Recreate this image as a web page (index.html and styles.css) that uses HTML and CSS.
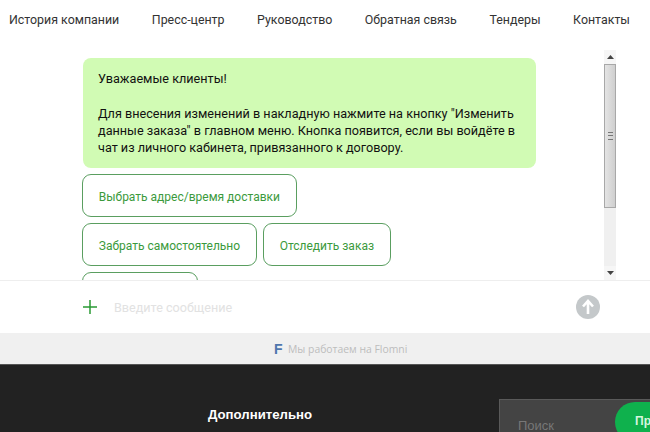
FILE: index.html

```html
<!DOCTYPE html>
<html lang="ru">
<head>
  <meta charset="UTF-8">
  <title>Чат</title>
  <link rel="stylesheet" href="styles.css">
</head>
<body>

  <div class="nav">
    <a>История компании</a>
    <a>Пресс-центр</a>
    <a>Руководство</a>
    <a>Обратная связь</a>
    <a>Тендеры</a>
    <a>Контакты</a>
  </div>

  <div class="chat">
    <div class="messages">
      <div class="bubble">
        <p>Уважаемые клиенты!</p>
        <p>Для внесения изменений в накладную нажмите на кнопку "Изменить данные заказа" в главном меню. Кнопка появится, если вы войдёте в чат из личного кабинета, привязанного к договору.</p>
      </div>
      <div class="actions">
        <button>Выбрать адрес/время доставки</button>
      </div>
      <div class="actions">
        <button>Забрать самостоятельно</button>
        <button>Отследить заказ</button>
      </div>
      <div class="actions">
        <button class="cut">&nbsp;</button>
      </div>
    </div>
    <div class="scrollbar">
      <div class="arrow">
        <svg width="7" height="4" viewBox="0 0 7 4"><path d="M0 4 L3.5 0 L7 4 Z" fill="#444"/></svg>
      </div>
      <div class="thumb"><span class="grip"></span></div>
      <div class="arrow arrow-down">
        <svg width="7" height="4" viewBox="0 0 7 4"><path d="M0 0 L3.5 4 L7 0 Z" fill="#444"/></svg>
      </div>
    </div>
  </div>

  <div class="composer">
    <svg class="plus" width="14" height="14" viewBox="0 0 14 14"><path d="M7 0 V14 M0 7 H14" stroke="#2a9a35" stroke-width="1.5"/></svg>
    <div class="placeholder">Введите сообщение</div>
    <div class="send">
      <svg width="14" height="16" viewBox="0 0 14 16"><path d="M7 15 V3 M2 7.5 L7 2 L12 7.5" fill="none" stroke="#fff" stroke-width="2.6"/></svg>
    </div>
  </div>

  <div class="powered">
    <span class="flomni-logo">F</span>
    <span>Мы работаем на Flomni</span>
  </div>

  <div class="footer">
    <h3>Дополнительно</h3>
    <div class="search">
      <span class="search-text">Поиск</span>
      <span class="search-btn">Пр</span>
    </div>
  </div>

</body>
</html>
```

FILE: styles.css

```css
html, body {
  height: 432px;
  overflow: hidden;
}

body {
  margin: 0;
  font-family: Roboto, sans-serif;
  background: white;
  color: #222;
}

.nav {
  height: 38px;
  padding: 12px 20px 0 9px;
  box-sizing: border-box;
  display: flex;
  justify-content: space-between;
  font-size: 12.4px;
  line-height: 15px;
  color: #333;
}

.chat {
  height: 242px;
  padding-left: 82px;
  padding-right: 34px;
  display: flex;
  justify-content: space-between;
  overflow: hidden;
}

.messages {
  width: 455px;
  padding-top: 20px;
}

.bubble {
  box-sizing: border-box;
  width: 453px;
  height: 110px;
  margin-left: 1px;
  padding: 12px 15px;
  background: #d1fbb4;
  border-radius: 8px;
  font-size: 12.65px;
  line-height: 17.3px;
  color: #111;
}

.bubble p {
  margin: 0 0 17.3px;
}

.actions {
  display: flex;
  gap: 6px;
  margin-top: 6px;
}

button {
  height: 43px;
  padding: 2px 15.8px 0;
  background: white;
  border: 1px solid #5a9e60;
  border-radius: 9px;
  font-family: Roboto, sans-serif;
  font-size: 12px;
  color: #3b9a3c;
}

.cut {
  width: 116px;
}

.scrollbar {
  width: 12px;
  margin-top: 12px;
  background: #f0f0f0;
  display: flex;
  flex-direction: column;
  height: 230px;
}

.arrow {
  height: 14px;
  display: flex;
  align-items: center;
  justify-content: center;
  background: #f6f6f6;
}

.arrow-down {
  margin-top: auto;
}

.thumb {
  height: 144px;
  box-sizing: border-box;
  border: 1px solid #a8a8a8;
  background: linear-gradient(to right, #e4e4e4, #cfcfcf);
  display: flex;
  align-items: center;
  justify-content: center;
}

.grip {
  width: 5px;
  height: 6px;
  border-top: 1px solid #777;
  border-bottom: 1px solid #777;
  background: linear-gradient(to bottom, transparent 2px, #777 2px, #777 3px, transparent 3px);
}

.composer {
  height: 53px;
  box-sizing: border-box;
  border-top: 1px solid #eeeeee;
  padding: 0 50px 0 83px;
  display: flex;
  align-items: center;
  background: white;
}

.placeholder {
  margin-left: 17px;
  font-size: 12.6px;
  color: #e2e2e2;
  flex: 1;
}

.send {
  width: 24px;
  height: 24px;
  border-radius: 50%;
  background: #c4c8ca;
  display: flex;
  align-items: center;
  justify-content: center;
}

.powered {
  height: 31px;
  background: #f0f0f0;
  display: flex;
  align-items: center;
  padding-left: 274px;
  font-family: "Open Sans", sans-serif;
  font-size: 10.4px;
  color: #bdbdbd;
}

.flomni-logo {
  width: 14px;
  font-family: "Liberation Sans", sans-serif;
  font-weight: bold;
  font-size: 14px;
  color: #4f76ad;
}

.footer {
  height: 68px;
  background: #222;
  border-top: 1px solid #555;
  box-sizing: border-box;
  display: flex;
  padding-left: 208px;
  overflow: hidden;
}

.footer h3 {
  margin: 42px 0 0;
  width: 291px;
  font-family: "Liberation Sans", sans-serif;
  font-size: 13.2px;
  line-height: 16px;
  color: white;
}

.search {
  margin-top: 34px;
  flex: 1;
  height: 60px;
  background: #444;
  border-top: 1px solid #5a5a5a;
  border-left: 1px solid #5a5a5a;
  position: relative;
}

.search-text {
  position: absolute;
  left: 18px;
  top: 18px;
  font-family: "Liberation Sans", sans-serif;
  font-size: 13px;
  color: #777;
}

.search-btn {
  position: absolute;
  right: 0;
  top: 2px;
  width: 35px;
  height: 40px;
  padding: 12px 0 0 20px;
  box-sizing: border-box;
  border-radius: 20px 0 0 20px;
  background: #0fb14d;
  font-family: "Liberation Sans", sans-serif;
  font-weight: bold;
  font-size: 12px;
  white-space: nowrap;
  color: #d8f5df;
}
```
